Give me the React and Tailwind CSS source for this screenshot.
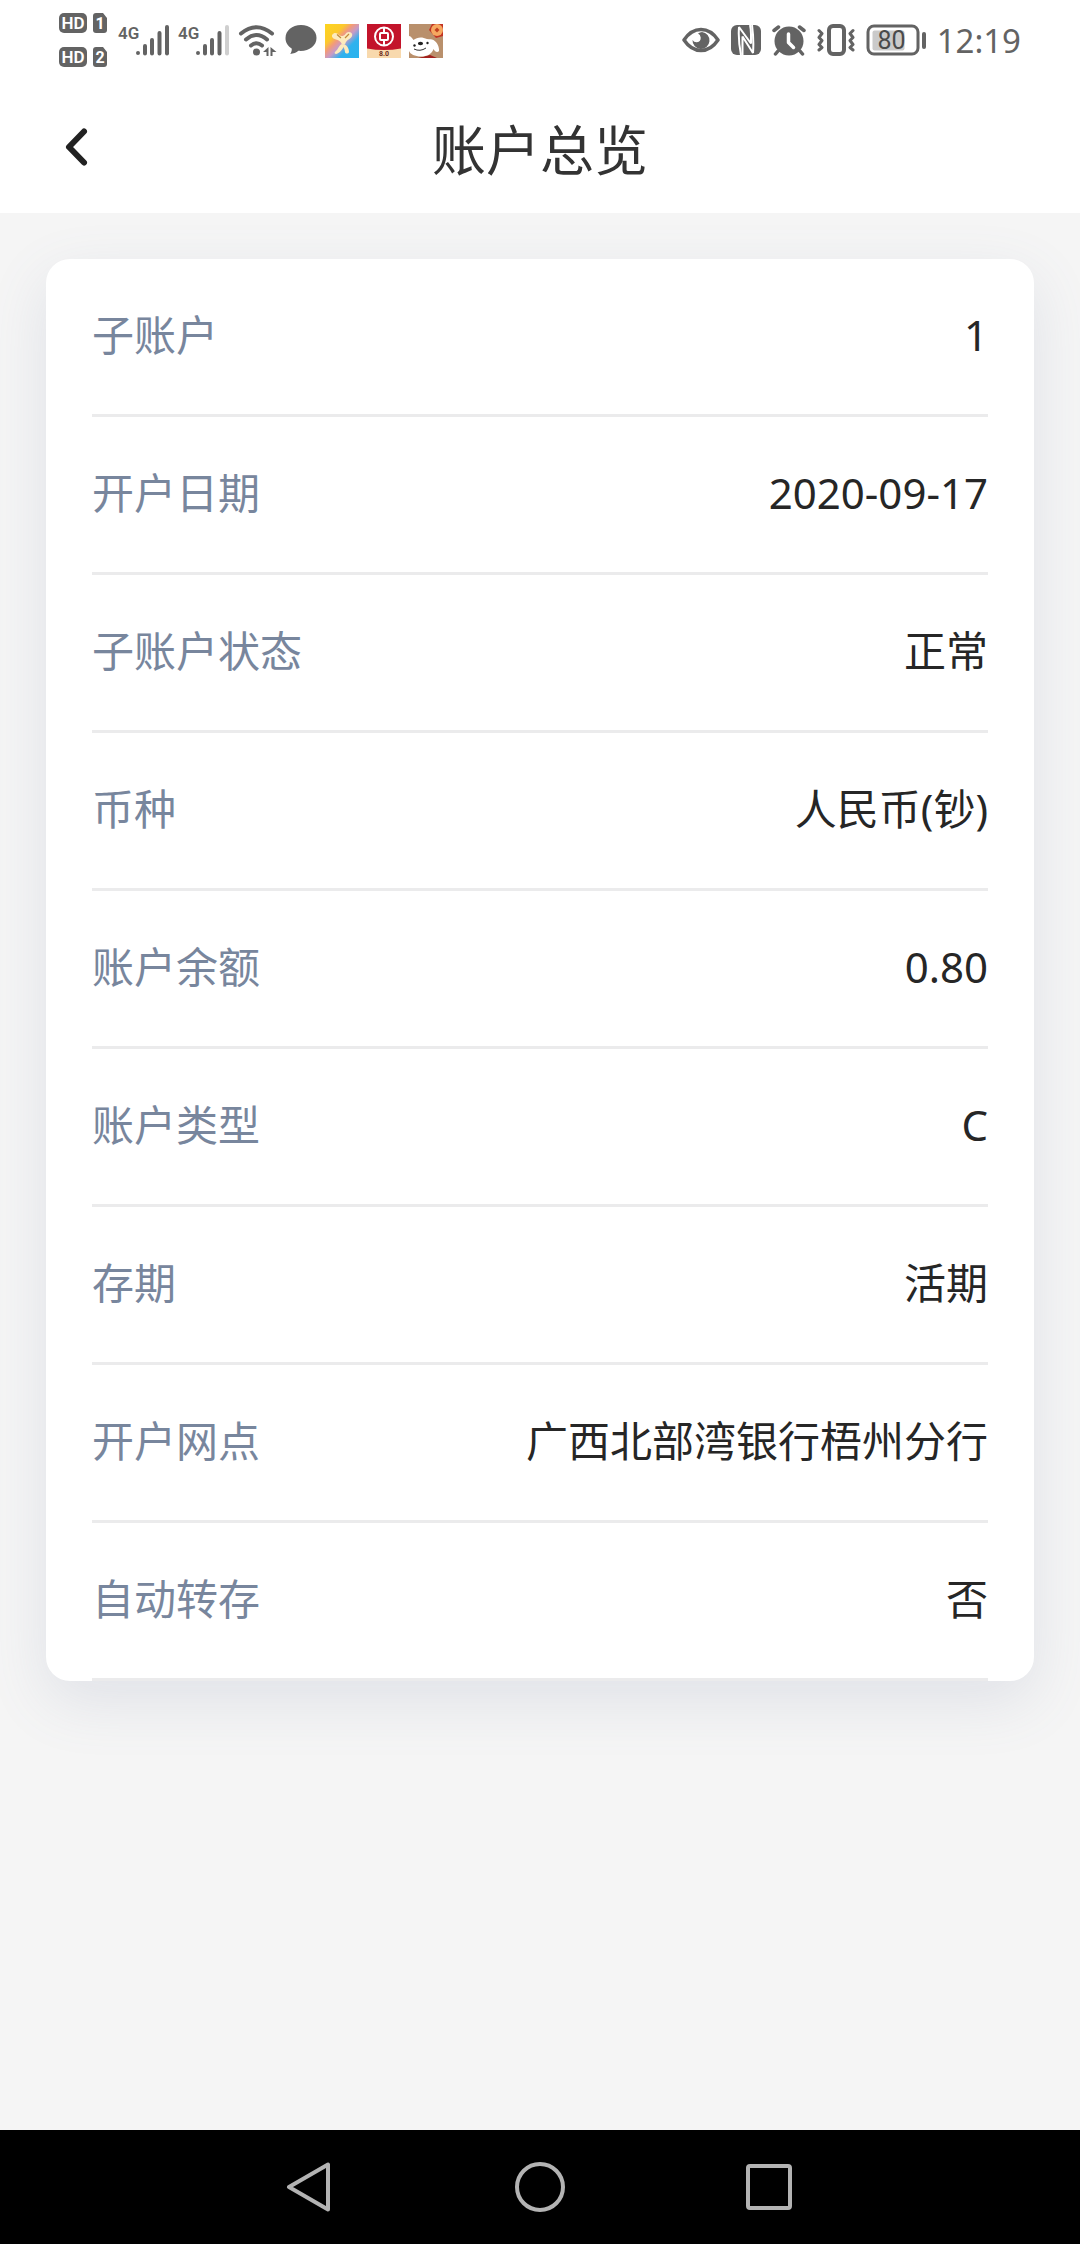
import React from "react";

const rows = [
  ["子账户", "1"],
  ["开户日期", "2020-09-17"],
  ["子账户状态", "正常"],
  ["币种", "人民币(钞)"],
  ["账户余额", "0.80"],
  ["账户类型", "C"],
  ["存期", "活期"],
  ["开户网点", "广西北部湾银行梧州分行"],
  ["自动转存", "否"],
];

const BOLD = '"Roboto", "Liberation Sans", sans-serif';

function SimBadge({ slot }) {
  return (
    <svg width="51" height="20" viewBox="0 0 51 20" className="overflow-visible" aria-label={`HD ${slot}`}>
      <rect x="0" y="0" width="28" height="20" rx="5" fill="#636363" />
      <text x="14" y="16" textAnchor="middle" fontFamily={BOLD} fontSize="17" fontWeight="600" fill="#fff">
        HD
      </text>
      <path d="M37 0h7l4 5v12a3 3 0 0 1-3 3h-8a3 3 0 0 1-3-3V3a3 3 0 0 1 3-3z" fill="#636363" />
      <text x="41" y="16" textAnchor="middle" fontFamily={BOLD} fontSize="16" fontWeight="700" fill="#fff">
        {slot}
      </text>
    </svg>
  );
}

function Signal({ weak }) {
  return (
    <svg width="52" height="32" viewBox="0 0 52 32" className="overflow-visible" aria-label="4G">
      <text x="0" y="15" fontFamily={BOLD} fontSize="17" fontWeight="600" fill="#636363">
        4G
      </text>
      <g stroke="#636363" strokeWidth="4" strokeLinecap="round">
        <path d="M20 29v0.1M27 22v7.5M34 16v13.5M41.5 9v20.5" />
        <path d="M49 3v26.5" stroke={weak ? "#cfcfcf" : "#636363"} />
      </g>
    </svg>
  );
}

function Wifi() {
  return (
    <svg width="39" height="32" viewBox="0 0 39 32" aria-hidden="true">
      <g fill="none" stroke="#636363" strokeWidth="4" strokeLinecap="round">
        <path d="M3 9.500Q18.500 -3 34 9.500" />
        <path d="M8 15.500Q18.500 6.500 29 15.500" />
        <path d="M13 21.500Q18.500 17 24 21.500" />
      </g>
      <circle cx="18.500" cy="28" r="3.500" fill="#636363" />
      <path d="M30.500 23v9h-2v-4H25zM32.500 23l6 5h-4v4h-2z" fill="#636363" />
    </svg>
  );
}

function Chat() {
  return (
    <svg width="32" height="30" viewBox="0 0 32 30" aria-hidden="true">
      <path
        d="M16 0C7 0 .5 5.600.5 13c0 4.500 2.300 8.200 6.200 10.500.3 2-.3 3.800-1.500 5.500 3.300-.2 6.200-1.500 8.200-3.200 10.200.9 18.100-4.800 18.100-12.800C31.500 5.600 25 0 16 0z"
        fill="#636363"
      />
    </svg>
  );
}

function AppFigure() {
  return (
    <svg width="34" height="34" viewBox="0 0 34 34" aria-hidden="true">
      <defs>
        <linearGradient id="figure" x1="0" y1="0" x2="1" y2="1">
          <stop offset="0" stopColor="#fdd51f" />
          <stop offset=".3" stopColor="#fcc92c" />
          <stop offset=".42" stopColor="#f29a7c" />
          <stop offset=".54" stopColor="#c79ac8" />
          <stop offset=".7" stopColor="#2fb2ee" />
          <stop offset="1" stopColor="#29b3ee" />
        </linearGradient>
      </defs>
      <rect width="34" height="34" fill="url(#figure)" />
      <g fill="#fdebbd">
        <path d="M7 11c2-3 5-2.500 7 0 2 1.500 4.500 1.500 6.500-1 1-2 4-3 6-1 2 2.500-.5 5-3 6.500-2 1.300-3 3-3.500 5h-3c-1-2.500-2.500-4-5-4.800C9 15 6.500 14 7 11z" />
        <path d="M17 20c-3 1-3.500 5-7 8-1.500 1.500 1 2.500 2.500 1.500 3.500-2 5.500-4.500 6.500-8z" />
        <path d="M17.500 20c4 0 6.500 4 6.500 8-.5 2-3.500 2-4 .3-.3-2.800-.9-4.800-2.500-6.300z" />
      </g>
      <path d="M12 10.500l4 3.500M24 10l-4 4" stroke="#c08a3c" strokeWidth="1.200" />
    </svg>
  );
}

function AppBank() {
  return (
    <svg width="34" height="34" viewBox="0 0 34 34" className="overflow-visible" aria-hidden="true">
      <rect width="34" height="34" fill="#c3142b" />
      <path d="M0 24.500Q17 27.500 34 24.500V34H0z" fill="#f8d9ad" />
      <g fill="none" stroke="#fff" strokeWidth="2">
        <circle cx="17" cy="12.500" r="9" />
        <rect x="13" y="9" width="8" height="7" rx="1" />
        <path d="M17 3.500V9M17 16v5.500" />
      </g>
      <text x="17" y="32" textAnchor="middle" fontFamily={BOLD} fontSize="7" fontWeight="700" fill="#6b2b1c">
        8.0
      </text>
    </svg>
  );
}

function AppDog() {
  return (
    <svg width="34" height="34" viewBox="0 0 34 34" aria-hidden="true">
      <rect width="34" height="34" fill="#b9906c" />
      <path d="M9 34l12-3 7 3z" fill="#a3201d" />
      <path d="M20 6l3-6h11v12l-7 2z" fill="#c23323" />
      <circle cx="28" cy="6" r="6" fill="#f6a860" />
      <path d="M25.500 6L28 3.500 30.500 6 28 8.500z" fill="#c2401f" />
      <path
        d="M0 12c1.500 0 3 2 4.500 4C8 13 13 12.500 18 15c3 .5 4.500 0 6.500 1 3.500 2 6 7 5.500 11-1.500 2-4 1-5.500-2C23 30 18 32.500 12 32.500 6 32.500 1 30 0 27z"
        fill="#fff"
      />
      <ellipse cx="11.500" cy="19.500" rx="2.600" ry="1.700" fill="#222" />
      <circle cx="5.500" cy="21.500" r="1.200" fill="#222" />
      <circle cx="18.500" cy="19" r="1.200" fill="#222" />
      <path d="M5 25q6 3 12-1" fill="none" stroke="#333" strokeWidth="1" />
    </svg>
  );
}

function Eye() {
  return (
    <svg width="38" height="26" viewBox="0 0 38 26" aria-hidden="true">
      <path d="M2 13Q9 2.500 19 2.500T36 13Q29 23.500 19 23.500T2 13z" fill="none" stroke="#636363" strokeWidth="3.500" strokeLinejoin="round" />
      <path d="M20 5a8.500 8.500 0 1 1-9.500 8q1.500 2.500 4.500 2.200 4-.7 3.700-4.700-.3-3-2.700-4 2-1.500 4-1.500z" fill="#636363" />
    </svg>
  );
}

function Nfc() {
  return (
    <svg width="30" height="30" viewBox="0 0 30 30" aria-hidden="true">
      <rect width="30" height="30" rx="6" fill="#636363" />
      <g fill="none" stroke="#fff" strokeWidth="2" strokeLinejoin="bevel">
        <path d="M10 30Q7 15 8 2L20 18.500V9Q20 4 19 0" />
        <path d="M11.500 30V11.500L22 28Q23 15 21 0" />
      </g>
    </svg>
  );
}

function Alarm() {
  return (
    <svg width="34" height="31" viewBox="0 0 34 31" aria-hidden="true">
      <circle cx="17" cy="16" r="14.500" fill="#636363" />
      <g fill="none" stroke="#636363" strokeWidth="3.500" strokeLinecap="round">
        <path d="M2 5.500L6.500 2M32 5.500L27.500 2M6 26l-2.500 3M28 26l2.500 3" />
      </g>
      <path d="M16.500 9v8.500l5 5" fill="none" stroke="#fff" strokeWidth="3.500" strokeLinecap="round" strokeLinejoin="round" />
    </svg>
  );
}

function Vibrate() {
  return (
    <svg width="38" height="32" viewBox="0 0 38 32" aria-hidden="true">
      <rect x="12" y="2" width="15" height="28" rx="4" fill="none" stroke="#636363" strokeWidth="4" />
      <g fill="none" stroke="#636363" strokeWidth="3" strokeLinecap="round" strokeLinejoin="round">
        <path d="M2 6.500l3 3-3 4 3 3-3 4 3 3-3 2.500" />
        <path d="M36 6.500l-3 3 3 4-3 3 3 4-3 3 3 2.500" />
      </g>
    </svg>
  );
}

function Battery() {
  return (
    <svg width="60" height="32" viewBox="0 0 60 32" className="overflow-visible" aria-label="80%">
      <rect x="2" y="2" width="50" height="28" rx="6" fill="none" stroke="#636363" strokeWidth="3" />
      <rect x="6.500" y="6.500" width="32" height="20" rx="2" fill="#cacaca" />
      <path d="M58 10v13" stroke="#636363" strokeWidth="4" strokeLinecap="round" />
      <text x="25.500" y="25" textAnchor="middle" fontFamily='"Roboto", sans-serif' fontSize="25" fill="#4a4a4a">
        80
      </text>
    </svg>
  );
}

function StatusBar() {
  return (
    <div className="flex h-20 items-center justify-between px-[59px] text-[#636363]">
      <div className="flex items-center gap-2">
        <div className="flex flex-col gap-3.5">
          <SimBadge slot="1" />
          <SimBadge slot="2" />
        </div>
        <Signal />
        <Signal weak />
        <Wifi />
        <Chat />
        <div className="flex gap-2 pt-0.5">
          <AppFigure />
          <AppBank />
          <AppDog />
        </div>
      </div>
      <div className="flex items-center gap-[11px]">
        <Eye />
        <Nfc />
        <Alarm />
        <Vibrate />
        <Battery />
        <time className="pt-0.5 text-[33px] leading-10">12:19</time>
      </div>
    </div>
  );
}

export default function App() {
  return (
    <div className="flex min-h-screen flex-col bg-[#f5f5f5] font-['Noto_Sans','Noto_Sans_CJK_SC',sans-serif]">
      <header className="relative z-10 bg-white">
        <StatusBar />
        <div className="grid h-[133px] grid-cols-[1fr_auto_1fr] items-center">
          <button type="button" aria-label="返回" className="ml-[60px] flex size-12 items-center">
            <svg width="32" height="40" viewBox="0 0 32 40" aria-hidden="true">
              <path d="M24 4.500L9 20l15 15.500" fill="none" stroke="#222" strokeWidth="6" strokeLinecap="round" strokeLinejoin="round" />
            </svg>
          </button>
          <h1 className="pt-1.5 text-[54px] leading-[72px] text-[#333]">账户总览</h1>
        </div>
      </header>

      <main className="flex-1 px-[46px] py-[46px]">
        <dl className="rounded-3xl bg-white px-[46px] text-[42px] leading-[60px] shadow-[0_20px_60px_rgba(100,115,155,0.14)]">
          {rows.map(([label, value]) => (
            <div key={label} className="flex h-[158px] items-center justify-between border-b-[3px] border-[#ebebec] pb-1">
              <dt className="text-[#78869d]">{label}</dt>
              <dd className="text-[#262626]">{value}</dd>
            </div>
          ))}
        </dl>
      </main>

      <nav className="flex h-[114px] items-center justify-center gap-[180px] bg-black">
        <button type="button" aria-label="后退">
          <svg width="50" height="50" viewBox="0 0 50 50" fill="none" stroke="#b3b3b3" strokeWidth="4" strokeLinejoin="round">
            <path d="M43 2.500v45L4 25z" />
          </svg>
        </button>
        <button type="button" aria-label="主页">
          <svg width="50" height="50" viewBox="0 0 50 50" fill="none" stroke="#b3b3b3" strokeWidth="4">
            <circle cx="25" cy="25" r="23" />
          </svg>
        </button>
        <button type="button" aria-label="最近任务">
          <svg width="50" height="50" viewBox="0 0 50 50" fill="none" stroke="#b3b3b3" strokeWidth="4">
            <rect x="3" y="4" width="42" height="42" rx="2" />
          </svg>
        </button>
      </nav>
    </div>
  );
}
